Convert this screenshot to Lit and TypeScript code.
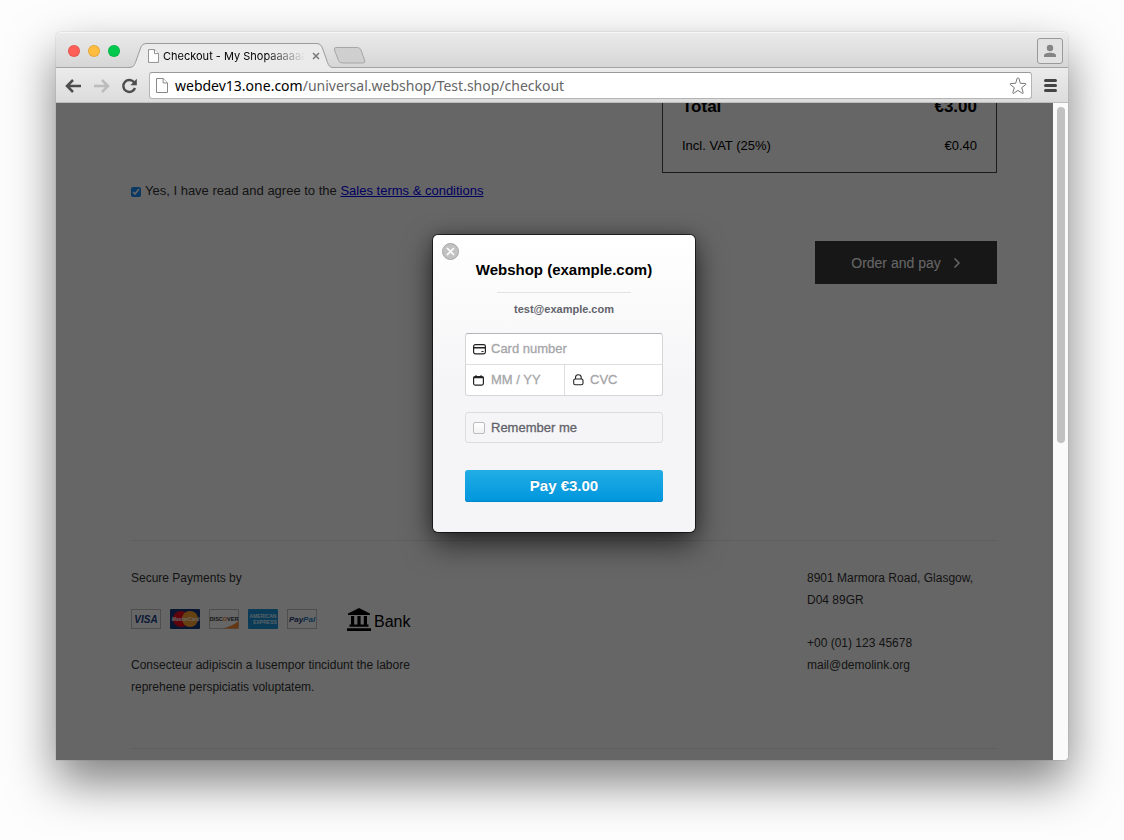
import { LitElement, html, css, svg } from "lit";
import { customElement, property } from "lit/decorators.js";

@customElement("browser-chrome")
class BrowserChrome extends LitElement {
  @property() tabTitle = "";
  @property() domain = "";
  @property() path = "";

  static styles = css`
    :host { display: block; font-family: Inter, "Noto Sans", sans-serif; }
    * { box-sizing: border-box; }
    button { border: 0; padding: 0; background: none; font: inherit; display: grid; place-items: center; }
    svg { display: block; }
    .strip { display: flex; align-items: flex-end; height: 36px; background: linear-gradient(#ebebeb, #d6d6d6); border-bottom: 1px solid #a3a3a3; border-radius: 5px 5px 0 0; box-shadow: inset 0 1px #f6f6f6; }
    .lights { display: flex; gap: 8px; padding: 0 8px 10px 12px; }
    .light { width: 12px; height: 12px; border-radius: 50%; border: 1px solid rgba(0, 0, 0, 0.1); }
    .red { background: #ff5f57; }
    .yellow { background: #ffbd3f; }
    .green { background: #00ca4e; }
    .tab { display: grid; width: 205px; height: 25px; margin-bottom: -1px; }
    .tab > * { grid-area: 1 / 1; }
    .tab-body { display: flex; align-items: center; padding: 0 13px 0 20px; z-index: 1; min-width: 0; }
    .title { flex: 1; min-width: 0; margin: 0 7px 0 4px; font-size: 11px; line-height: 16px; white-space: nowrap; overflow: hidden; -webkit-mask-image: linear-gradient(90deg, #000 72%, transparent); mask-image: linear-gradient(90deg, #000 72%, transparent); color: #000; }
    .new { margin-bottom: 3px; }
    .user { margin: 0 5px 3px auto; width: 26px; height: 26px; border: 1px solid #999; border-radius: 3px; background: #e2e2e2; }
    .bar { display: flex; align-items: center; height: 35px; padding: 1px 11px 0 9px; background: linear-gradient(#ebebeb, #dcdcdc); border-bottom: 1px solid #bdbdbd; }
    .nav { width: 17px; margin-right: 11px; }
    .address { flex: 1; display: flex; align-items: center; height: 27px; padding: 0 4px 0 6px; background: #fff; border: 1px solid #b4b4b4; border-top-color: #999; border-radius: 3px; min-width: 0; }
    .url { flex: 1; margin-left: 7px; font-family: "Noto Sans", sans-serif; font-size: 14px; line-height: 20px; color: #666; white-space: nowrap; overflow: hidden; }
    .host { color: #000; }
    .menu { margin-left: 12px; }
  `;

  private doc(w: number, h: number) {
    return html`<svg width=${w} height=${h} viewBox="0 0 12 15" fill="#fff" stroke="#888"><path d="M.5.5h6.6l4.4 4.4v9.6H.5z" /><path d="M7.1.5v4.4h4.4" /></svg>`;
  }

  render() {
    return html`
      <div class="strip">
        <div class="lights"><span class="light red"></span><span class="light yellow"></span><span class="light green"></span></div>
        <div class="tab">
          <svg width="205" height="25" viewBox="0 0 206 25" preserveAspectRatio="none"><path d="M0 24.500C5 24.500 6 23 7.500 19.500L13 4Q14.500.500 18 .500H190Q193.500.500 195 4L200.500 19.500Q202 24.500 206 24.500V25H0Z" fill="#ebebeb" /><path d="M0 24.500C5 24.500 6 23 7.500 19.500L13 4Q14.500.500 18 .500H190Q193.500.500 195 4L200.500 19.500Q202 24.500 206 24.500" fill="none" stroke="#9b9b9b" /></svg>
          <div class="tab-body">${this.doc(11, 14)}<span class="title">${this.tabTitle}</span>
            <button aria-label="Close tab"><svg width="8" height="8" viewBox="0 0 8 8" stroke="#777" stroke-width="1.500"><path d="M1 1l6 6M7 1L1 7" /></svg></button>
          </div>
        </div>
        <button class="new" aria-label="New tab"><svg width="34" height="17" viewBox="0 0 34 17"><path d="M3 .500H24.500Q27 .500 28 3L31.500 13Q32.500 16 30 16H9.500Q6.500 16 5.500 13.500L1.500 3Q.700.500 3 .500Z" fill="#cfcfcf" stroke="#a6a6a6" /></svg></button>
        <button class="user" aria-label="Profile"><svg width="14" height="14" viewBox="0 0 14 14" fill="#858585"><circle cx="7" cy="4" r="3.200" /><path d="M1 13v-1.500C1 9.500 4 8.700 7 8.700s6 .8 6 2.800V13z" /></svg></button>
      </div>
      <div class="bar">
        <button class="nav" aria-label="Back"><svg width="17" height="14" viewBox="0 0 17 14" fill="none" stroke="#4d4d4d" stroke-width="2.500"><path d="M16 7H2.500M8 1L2 7l6 6" /></svg></button>
        <button class="nav" aria-label="Forward"><svg width="17" height="14" viewBox="0 0 17 14" fill="none" stroke="#bcbcbc" stroke-width="2.500"><path d="M1 7h13.500M9 1l6 6-6 6" /></svg></button>
        <button class="nav" aria-label="Reload"><svg width="17" height="16" viewBox="0 0 17 16" fill="none" stroke="#4d4d4d" stroke-width="2.400"><path d="M13.300 4.600A6 6 0 1 0 14 10" /><path d="M15.800.800v6.400H9.400z" fill="#4d4d4d" stroke="none" /></svg></button>
        <div class="address">${this.doc(12, 15)}
          <span class="url"><span class="host">${this.domain}</span>${this.path}</span>
          <button aria-label="Bookmark"><svg width="18" height="18" viewBox="0 0 18 18" fill="#fff" stroke="#777" stroke-linejoin="round"><path d="M9 .800Q9.800 .800 10 1.600L11.300 6.300 16.300 6.500Q17.600 6.800 16.700 7.600L12.700 10.700 14.200 15.600Q14.300 16.800 13.200 16.300L9 13.400 4.800 16.300Q3.700 16.800 3.800 15.600L5.300 10.700 1.300 7.600Q.400 6.800 1.700 6.500L6.700 6.300 8 1.600Q8.200 .800 9 .800Z" /></svg></button>
        </div>
        <button class="menu" aria-label="Menu"><svg width="13" height="13" viewBox="0 0 13 13" stroke="#444" stroke-width="3" stroke-linecap="round"><path d="M1.500 1.500h10M1.500 6.500h10M1.500 11.500h10" /></svg></button>
      </div>
    `;
  }
}

@customElement("pay-dialog")
class PayDialog extends LitElement {
  static styles = css`
    :host { display: block; width: 262px; font-family: "Liberation Sans", Arial, sans-serif; }
    * { box-sizing: border-box; }
    svg { display: block; flex: none; }
    .card { position: relative; padding: 26px 32px 30px; border-radius: 5px; background: linear-gradient(#fff, #f5f5f7 50%); box-shadow: 0 0 0 1px rgba(0, 0, 0, 0.6), 0 12px 30px rgba(0, 0, 0, 0.6), 0 0 16px rgba(0, 0, 0, 0.25); text-align: center; }
    .close { position: absolute; top: 8px; left: 9px; width: 17px; height: 17px; padding: 0; border: 1px solid #a5a5a5; border-radius: 50%; background: #c2c2c2; display: grid; place-items: center; }
    h1 { margin: 0; font-size: 15px; line-height: 18px; color: #000; white-space: nowrap; }
    hr { width: 134px; height: 1px; margin: 13px auto 9px; border: 0; background: #e3e3e5; }
    .email { margin: 0; font-size: 11px; line-height: 14px; font-weight: bold; color: #62626a; }
    .fields { display: grid; grid-template-columns: 1fr 1fr; margin-top: 17px; border: 1px solid #d6d6d8; border-top-color: #b4b4b8; border-radius: 3px; background: #fff; overflow: hidden; }
    .field { display: flex; align-items: center; gap: 5px; height: 30px; padding-left: 7px; min-width: 0; }
    .number { grid-column: 1 / 3; height: 31px; border-bottom: 1px solid #dedee0; }
    .code { border-left: 1px solid #dedee0; }
    input.text { flex: 1; min-width: 0; width: 100%; border: 0; padding: 0; background: none; font: 13px/20px "Liberation Sans", Arial, sans-serif; outline: 0; }
    input.text::placeholder { color: #a6a6aa; opacity: 1; -webkit-text-stroke: 0.3px #a6a6aa; }
    .remember { display: flex; align-items: center; gap: 6px; height: 31px; margin-top: 16px; padding-left: 7px; border: 1px solid #dcdcde; border-radius: 3px; font-size: 13px; line-height: 18px; color: #62626a; -webkit-text-stroke: 0.3px #62626a; }
    .remember input { appearance: none; width: 12px; height: 12px; margin: 0; border: 1px solid #bcbcbe; border-radius: 2px; background: linear-gradient(#fff, #f2f2f2); }
    .pay { display: block; width: 100%; height: 32px; margin-top: 27px; padding: 0; border: 0; border-radius: 3px; background: linear-gradient(#22aee6, #0095dc); box-shadow: inset 0 -1px #0087c8; color: #fff; font: bold 15px/18px "Liberation Sans", Arial, sans-serif; text-shadow: 0 -1px rgba(0, 60, 110, 0.25); }
  `;

  render() {
    return html`
      <form class="card" role="dialog" aria-label="Payment" @submit=${(e: Event) => e.preventDefault()}>
        <button class="close" type="button" aria-label="Close"><svg width="9" height="9" viewBox="0 0 9 9" stroke="#fff" stroke-width="1.700"><path d="M1 1l7 7M8 1L1 8" /></svg></button>
        <h1>Webshop (example.com)</h1>
        <hr />
        <p class="email">test@example.com</p>
        <div class="fields">
          <label class="field number"><svg width="13" height="11" viewBox="0 0 13 11"><rect x=".6" y=".6" width="11.800" height="9.300" rx="1.800" fill="#fff" stroke="#222" stroke-width="1.200" /><path d="M1 3.800h11" stroke="#222" stroke-width="1.500" /><path d="M8.500 7.500h2" stroke="#222" /></svg><input class="text" aria-label="Card number" placeholder="Card number" /></label>
          <label class="field"><svg width="13" height="11" viewBox="0 0 13 11"><rect x=".6" y="1.600" width="9.800" height="8.500" rx="1.500" fill="#fff" stroke="#222" stroke-width="1.200" /><path d="M.6 2.500h9.800" stroke="#222" stroke-width="1.600" /><path d="M3 .2v2M8 .2v2" stroke="#222" stroke-width="1.300" /></svg><input class="text" aria-label="Expiry date" placeholder="MM / YY" /></label>
          <label class="field code"><svg width="13" height="12" viewBox="0 0 13 12" fill="none" stroke="#222" stroke-width="1.100"><rect x="1.700" y="5" width="9.300" height="5.800" rx="1.500" /><path d="M3.500 5V3.600a2.850 2.850 0 0 1 5.700 0V5" /></svg><input class="text" aria-label="CVC" placeholder="CVC" /></label>
        </div>
        <label class="remember"><input type="checkbox" />Remember me</label>
        <button class="pay">Pay €3.00</button>
      </form>
    `;
  }
}

const cards = [
  { name: "Visa", art: svg`<rect x=".5" y=".5" width="29" height="19" fill="#fff" stroke="#c4c4c4"/><text x="15" y="14" text-anchor="middle" font-size="10" font-weight="bold" font-style="italic" fill="#1a3f88">VISA</text>` },
  { name: "MasterCard", art: svg`<rect width="30" height="20" rx="1" fill="#16397c"/><circle cx="11" cy="10" r="8" fill="#f00a20"/><circle cx="20" cy="10" r="8" fill="#ffa531"/><text x="15.500" y="12" text-anchor="middle" font-size="5" font-weight="bold" font-style="italic" fill="#fff">MasterCard</text>` },
  { name: "Discover", art: svg`<rect x=".5" y=".5" width="29" height="19" fill="#fff" stroke="#c4c4c4"/><path d="M14 19.500Q24 17 29.500 12v7.500z" fill="#ff8a30"/><text x="15" y="11.500" text-anchor="middle" font-size="5.500" font-weight="bold" fill="#333">DISC<tspan fill="#f08030">O</tspan>VER</text>` },
  { name: "American Express", art: svg`<rect width="30" height="20" rx="1" fill="#1f95d9"/><text x="15" y="9" text-anchor="middle" font-size="5" font-weight="bold" fill="#d8efff">AMERICAN</text><text x="17" y="15" text-anchor="middle" font-size="5" font-weight="bold" fill="#d8efff">EXPRESS</text>` },
  { name: "PayPal", art: svg`<rect x=".5" y=".5" width="29" height="19" fill="#fff" stroke="#c4c4c4"/><text x="15" y="13" text-anchor="middle" font-size="8" font-weight="bold" font-style="italic" fill="#1e3a76">Pay<tspan fill="#2a7fc0">Pal</tspan></text>` },
];

@customElement("checkout-page")
class CheckoutPage extends LitElement {
  static styles = css`
    :host { display: block; font-family: "Liberation Sans", Arial, sans-serif; font-size: 12px; line-height: 22px; color: #333; background: #fff; }
    * { box-sizing: border-box; }
    p { margin: 0; }
    .content { padding: 0 56px 11px 75px; }
    .summary { width: 335px; margin: -20px 0 0 auto; padding: 12px 19px 15px; border: 1px solid #444; color: #000; }
    .row { display: flex; justify-content: space-between; font-size: 13px; }
    .row.total { font-size: 17px; font-weight: bold; margin-bottom: 17px; }
    .terms { display: flex; align-items: center; gap: 4px; margin-top: 7px; font-size: 13px; }
    .terms input { width: 10px; height: 10px; margin: 2px 0 0; accent-color: #1a8df0; }
    .terms a { color: #00e; }
    .order { display: flex; align-items: center; justify-content: center; gap: 12px; width: 182px; height: 43px; margin: 39px 0 256px auto; padding: 0; border: 0; background: #3a3a3a; color: #fff; font: 14px/20px "Liberation Sans", Arial, sans-serif; }
    footer { display: flex; justify-content: space-between; padding: 26px 0 50px; border: solid #ececec; border-width: 1px 0; }
    .about { width: 310px; }
    .pay { display: flex; align-items: center; gap: 9px; height: 22px; margin: 19px 0 24px; }
    .pay svg { display: block; font-family: "Liberation Sans", Arial, sans-serif; }
    .bank { display: flex; align-items: flex-end; gap: 3px; margin-left: 21px; font-size: 16px; line-height: 18px; color: #000; }
    address { width: 190px; font-style: normal; }
    .phone { margin-top: 21px; }
  `;

  render() {
    return html`
      <div class="content">
        <div class="summary">
          <div class="row total"><span>Total</span><span>€3.00</span></div>
          <div class="row"><span>Incl. VAT (25%)</span><span>€0.40</span></div>
        </div>
        <div class="terms"><input id="agree" type="checkbox" checked /><span><label for="agree">Yes, I have read and agree to the</label> <a href="#terms">Sales terms &amp; conditions</a></span></div>
        <button class="order">Order and pay <svg width="8" height="12" viewBox="0 0 8 12" fill="none" stroke="#fff" stroke-width="1.500"><path d="M1.500 1.500L6 6l-4.500 4.500" /></svg></button>
        <footer>
          <div class="about">
            <p>Secure Payments by</p>
            <div class="pay">
              ${cards.map((c) => html`<svg width="30" height="20" viewBox="0 0 30 20" role="img" aria-label=${c.name}>${c.art}</svg>`)}
              <span class="bank"><svg width="24" height="23" viewBox="0 0 24 23"><path d="M12 0l11 5.500V7H1V5.500zM4 8h3.200v9H4zm6.400 0h3.200v9h-3.200zm6.400 0H20v9h-3.200zM2.500 16.500h19v2.300h-19zM0 20.300h24V23H0z" /></svg>Bank</span>
            </div>
            <p>Consecteur adipiscin a lusempor tincidunt the labore reprehene perspiciatis voluptatem.</p>
          </div>
          <address>
            8901 Marmora Road, Glasgow,<br />D04 89GR
            <div class="phone">+00 (01) 123 45678</div>
            <div>mail@demolink.org</div>
          </address>
        </footer>
      </div>
    `;
  }
}

@customElement("app-root")
class AppRoot extends LitElement {
  static styles = css`
    :host { display: block; box-sizing: border-box; min-height: 100vh; padding: 32px 56px 80px; background: #fdfdfd; overflow: hidden; }
    .window { border-radius: 5px 5px 4px 0; box-shadow: 0 0 1px rgba(0, 0, 0, 0.5), 0 22px 48px rgba(0, 0, 0, 0.5); }
    .view { display: flex; border-radius: 0 0 4px 0; overflow: hidden; }
    .page { position: relative; flex: 1; min-width: 0; overflow: hidden; }
    .overlay { position: absolute; inset: 0; display: flex; justify-content: center; align-items: flex-start; padding: 132px 0 0 19px; background: rgba(0, 0, 0, 0.6); }
    .track { width: 15px; box-sizing: border-box; padding: 4px 3px 0 4px; background: #fafafa; }
    .thumb { height: 336px; border-radius: 4px; background: #c1c1c1; }
  `;

  render() {
    return html`
      <div class="window">
        <browser-chrome tabTitle="Checkout - My Shopaaaaaaaa" domain="webdev13.one.com" path="/universal.webshop/Test.shop/checkout"></browser-chrome>
        <div class="view">
          <div class="page">
            <checkout-page></checkout-page>
            <div class="overlay"><pay-dialog></pay-dialog></div>
          </div>
          <div class="track"><div class="thumb"></div></div>
        </div>
      </div>
    `;
  }
}
